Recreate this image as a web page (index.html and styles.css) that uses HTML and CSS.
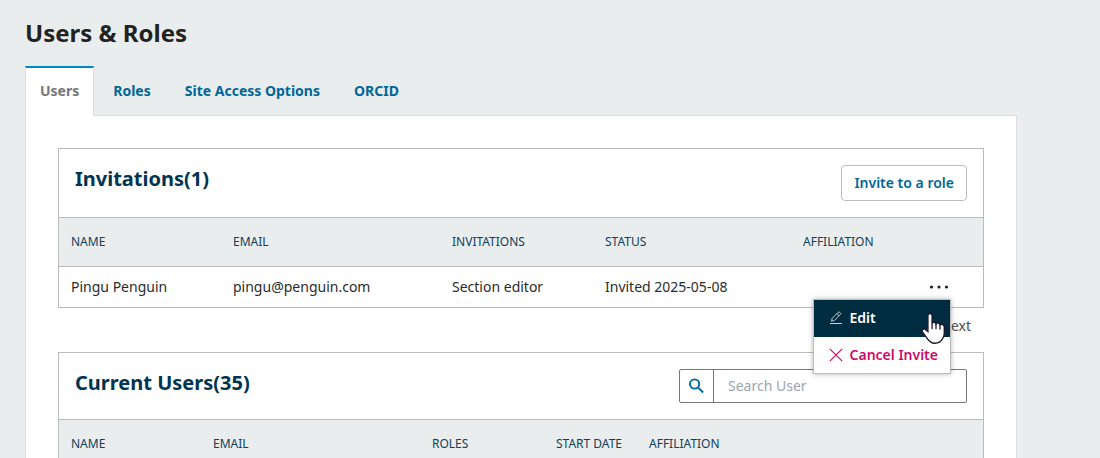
FILE: index.html
```html
<!DOCTYPE html>
<html lang="en">
<head>
<meta charset="utf-8">
<title>Users &amp; Roles</title>
<link rel="stylesheet" href="styles.css">
</head>
<body>
<main class="page">
  <h1 class="page-title">Users &amp; Roles</h1>
  <div class="tabs" role="tablist">
    <button class="tab tab-active" role="tab" aria-selected="true">Users</button>
    <button class="tab" role="tab">Roles</button>
    <button class="tab" role="tab">Site Access Options</button>
    <button class="tab" role="tab">ORCID</button>
  </div>
  <div class="panel">
    <section class="card">
      <header class="card-header">
        <h2 class="card-title">Invitations(1)</h2>
        <button class="btn">Invite to a role</button>
      </header>
      <table class="table">
        <colgroup><col class="w-162"><col class="w-219"><col class="w-153"><col class="w-198"><col><col class="w-80"></colgroup>
        <thead>
          <tr><th>NAME</th><th>EMAIL</th><th>INVITATIONS</th><th>STATUS</th><th>AFFILIATION</th><th></th></tr>
        </thead>
        <tbody>
          <tr>
            <td>Pingu Penguin</td><td>pingu@penguin.com</td><td>Section editor</td><td>Invited 2025-05-08</td><td></td>
            <td class="actions">
              <div class="dropdown">
                <button class="more" aria-label="More actions" aria-expanded="true">
                  <svg width="20" height="4" viewBox="0 0 20 4" fill="#222"><circle cx="2.500" cy="2" r="1.6"/><circle cx="10" cy="2" r="1.6"/><circle cx="17.500" cy="2" r="1.6"/></svg>
                </button>
                <div class="menu" role="menu">
                  <button class="menu-item menu-item-active" role="menuitem">
                    <svg width="14" height="14" viewBox="0 0 14 14" fill="none" stroke="#c5d0d5" stroke-width="1"><path d="M1 12.500h12M2.500 10.300l.7-3L9.100 1.400c.5-.5 1.200-.5 1.700 0l.5.5c.5.5.5 1.100 0 1.600L5.500 9.400zM7.900 2.700l2.200 2.200"/></svg>
                    Edit
                  </button>
                  <button class="menu-item menu-item-danger" role="menuitem">
                    <svg width="14" height="14" viewBox="0 0 14 14" fill="none" stroke="#d00a6c" stroke-width="1.2"><path d="M.8.8l12.400 12.400M13.200.8L.8 13.200"/></svg>
                    Cancel Invite
                  </button>
                  <svg class="pointer" width="26" height="32" viewBox="0 0 26 32"><path d="M9 1.500C10.200 1.500 11.100 2.500 11.100 3.800V11.200C11.500 9.800 14.700 9.800 15 11.700C15.700 10.500 18.700 10.700 19 12.700C20.100 11.800 23.300 12.300 23.300 14.900V21.500C23.300 23.600 22.500 25.300 21.500 26.700C20 29.900 17.200 31.200 13.800 31.200C10.100 31.200 8.500 29.700 6.500 26.800L1.600 20.200C.1 18.100 2.200 16.300 3.900 17.200L6.900 19.600V3.800C6.900 2.500 7.800 1.500 9 1.500Z" fill="#fff" stroke="#1d1830" stroke-width="1.400"/><path d="M11.100 11v5.500M15 11.700v5M19 12.700v4.500" fill="none" stroke="#1d1830" stroke-width="1.300" stroke-linecap="round"/></svg>
                </div>
              </div>
            </td>
          </tr>
        </tbody>
      </table>
    </section>
    <nav class="pagination"><a href="#next">Next</a></nav>
    <section class="card">
      <header class="card-header card-header-search">
        <h2 class="card-title">Current Users(35)</h2>
        <div class="search">
          <label class="search-icon" for="search-user" aria-label="Search User">
            <svg width="16" height="16" viewBox="0 0 16 16" fill="none" stroke="#006798" stroke-width="1.900"><circle cx="5.600" cy="6" r="4.600"/><path d="M9 9.400L14.100 14.500"/></svg>
          </label>
          <input class="search-input" id="search-user" type="search" placeholder="Search User">
        </div>
      </header>
      <table class="table">
        <colgroup><col class="w-142"><col class="w-219"><col class="w-124"><col class="w-93"><col></colgroup>
        <thead>
          <tr><th>NAME</th><th>EMAIL</th><th>ROLES</th><th>START DATE</th><th>AFFILIATION</th></tr>
        </thead>
      </table>
    </section>
  </div>
</main>
</body>
</html>
```
FILE: styles.css
```css
* { box-sizing: border-box; }
body {
  margin: 0;
  background: #e9eded;
  color: #2b2b2b;
  font: 14px/20px "Noto Sans", sans-serif;
}
button, input { font: inherit; margin: 0; }
button { cursor: pointer; }
.page { padding: 16px 83px 0 25px; }
.page-title {
  margin: 0 0 16px;
  color: #222;
  font-size: 24px;
  line-height: 34px;
  font-weight: 700;
}
.tabs { display: flex; gap: 4px; }
.tab {
  height: 49px;
  padding: 0 15px;
  border: 0;
  background: none;
  color: #006798;
  font-weight: 700;
}
.tab-active {
  height: 50px;
  margin-bottom: -1px;
  padding: 0 14px 2px;
  border: 1px solid #ddd;
  border-top: 2px solid #0088cc;
  border-bottom: 0;
  background: #fff;
  color: #777;
  z-index: 1;
}
.panel {
  padding: 32px 32px 0;
  border: 1px solid #ddd;
  border-bottom: 0;
  background: #fff;
}
.card { border: 1px solid #bbb; }
.card:last-child { border-bottom: 0; }
.card-header {
  display: flex;
  justify-content: space-between;
  align-items: flex-start;
  padding: 16px;
}
.card-title {
  margin: 0;
  color: #003450;
  font-size: 20px;
  line-height: 28px;
  font-weight: 700;
}
.btn {
  height: 36px;
  padding: 0 12px;
  border: 1px solid #bbb;
  border-radius: 4px;
  background: #fff;
  color: #006798;
  font-weight: 600;
}
.table {
  width: 100%;
  border-collapse: collapse;
  table-layout: fixed;
}
.table th {
  height: 49px;
  padding: 0 12px;
  border-top: 1px solid #bbb;
  border-bottom: 1px solid #bbb;
  background: #e9eded;
  color: #10405a;
  font-size: 12px;
  font-weight: 400;
  text-align: left;
  white-space: nowrap;
}
.card:last-child th { height: 39px; padding-top: 11px; border-bottom: 0; }
.table td { height: 40px; padding: 0 12px; }
.w-80 { width: 80px; }
.w-93 { width: 93px; }
.w-124 { width: 124px; }
.w-142 { width: 142px; }
.w-153 { width: 153px; }
.w-162 { width: 162px; }
.w-198 { width: 198px; }
.w-219 { width: 219px; }
.table .actions { padding-right: 32px; }
.dropdown {
  display: flex;
  justify-content: flex-end;
  position: relative;
}
.more {
  display: flex;
  align-items: center;
  justify-content: center;
  width: 24px;
  height: 24px;
  padding: 0;
  border: 0;
  background: none;
}
.menu {
  position: absolute;
  top: 100%;
  right: 0;
  z-index: 2;
  border: 1px solid #bbb;
  background: #fff;
  box-shadow: 0 0 5px rgba(0, 0, 0, 0.3);
}
.menu-item {
  display: flex;
  align-items: center;
  gap: 7px;
  width: 100%;
  height: 37px;
  padding: 0 12px 0 15px;
  border: 0;
  background: #fff;
  color: #d00a6c;
  font-weight: 600;
  white-space: nowrap;
}
.menu-item-danger { height: 36px; }
.menu-item-active { background: #002c40; color: #fff; }
.pointer {
  position: absolute;
  top: 12px;
  right: 3px;
}
.pagination {
  display: flex;
  justify-content: flex-end;
  padding: 8px 13px 16px;
}
.pagination a { color: #505050; text-decoration: none; }
.search {
  display: flex;
  width: 288px;
  height: 34px;
  border: 1px solid #777;
  border-radius: 2px;
}
.search-icon {
  display: flex;
  align-items: center;
  justify-content: center;
  width: 34px;
  border-right: 1px solid #777;
}
.search-input {
  flex: 1;
  min-width: 0;
  padding: 0 14px;
  border: 0;
  background: none;
  outline: 0;
}
.search-input::placeholder { color: #9ca3af; }
```
